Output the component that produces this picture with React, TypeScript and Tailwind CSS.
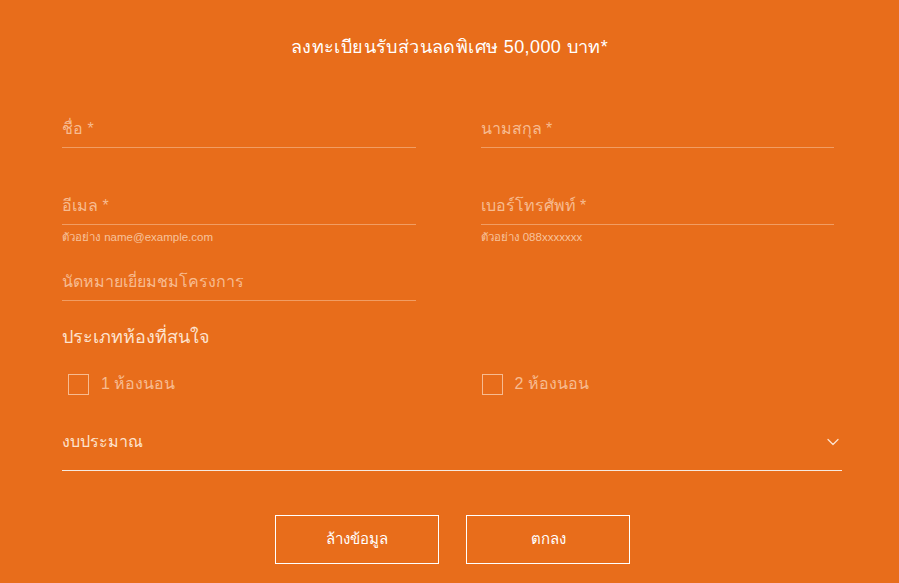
import React, { useState } from 'react';
import { ChevronDown } from 'lucide-react';

const font = { fontFamily: '"Liberation Sans", "Noto Sans", sans-serif' };

const Field = ({ label, hint }: { label: string; hint?: string }) => (
  <div className="flex flex-col">
    <input
      placeholder={label}
      className="h-[37px] w-full bg-transparent border-b border-[#f19d63] text-[16px] text-white placeholder:text-[#f7bb90] outline-none"
    />
    {hint && <span className="mt-[5px] text-[11.5px] leading-[14px] text-[#f7c29c]">{hint}</span>}
  </div>
);

const Check = ({ label, pad }: { label: string; pad: string }) => {
  const [on, setOn] = useState(false);
  return (
    <label className={`flex items-center gap-3 cursor-pointer ${pad}`}>
      <span
        onClick={() => setOn(!on)}
        className={`w-[21px] h-[21px] border border-[#f7bb90] ${on ? 'bg-white' : ''}`}
      />
      <span className="text-[16px] text-[#f7bb90]">{label}</span>
    </label>
  );
};

const App: React.FC = () => {
  return (
    <div className="w-[899px] h-[583px] bg-[#e86d1b] overflow-hidden" style={font}>
      <h1 className="pt-[35px] text-center text-[18px] leading-[24px] text-white tracking-[0.4px]">
        ลงทะเบียนรับส่วนลดพิเศษ 50,000 บาท*
      </h1>

      <div className="mt-[52px] px-[62px] grid grid-cols-2 gap-x-[65px] pr-[65px]">
        <Field label="ชื่อ *" />
        <Field label="นามสกุล *" />
      </div>

      <div className="mt-[40px] px-[62px] grid grid-cols-2 gap-x-[65px] pr-[65px]">
        <Field label="อีเมล *" hint="ตัวอย่าง name@example.com" />
        <Field label="เบอร์โทรศัพท์ *" hint="ตัวอย่าง 088xxxxxxx" />
      </div>

      <div className="mt-[20px] px-[62px] grid grid-cols-2 gap-x-[65px] pr-[65px]">
        <Field label="นัดหมายเยี่ยมชมโครงการ" />
      </div>

      <div className="mt-[23px] px-[62px] text-[18px] leading-[26px] text-[#fde3cf]">ประเภทห้องที่สนใจ</div>

      <div className="mt-[22px] px-[62px] grid grid-cols-2 gap-x-[65px] pr-[65px]">
        <Check label="1 ห้องนอน" pad="pl-[6px]" />
        <Check label="2 ห้องนอน" pad="pl-[1px]" />
      </div>

      <div className="mt-[28px] mx-[62px] mr-[57px] h-[47px] border-b border-[#f6e9df] flex items-center justify-between pb-[10px]">
        <span className="text-[16px] text-[#fde3cf]">งบประมาณ</span>
        <ChevronDown size={20} strokeWidth={1.5} className="text-[#fde3cf] -mr-[1px]" />
      </div>

      <div className="mt-[44px] ml-[6px] flex justify-center gap-[27px]">
        <button className="w-[164px] h-[49px] border border-white text-white text-[15px]">ล้างข้อมูล</button>
        <button className="w-[164px] h-[49px] border border-white text-white text-[15px]">ตกลง</button>
      </div>
    </div>
  );
};

export default App;
